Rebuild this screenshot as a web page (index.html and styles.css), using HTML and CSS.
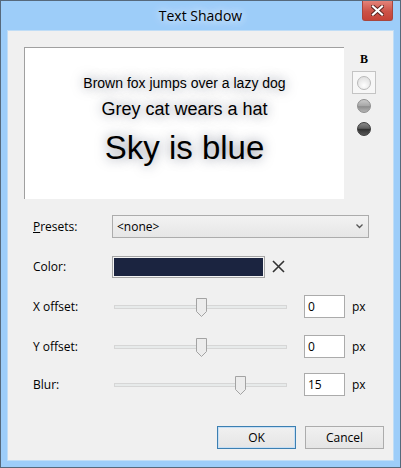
FILE: index.html
```html
<!DOCTYPE html>
<html lang="en">
<head>
  <meta charset="UTF-8" />
  <title>Text Shadow</title>
  <link rel="stylesheet" href="styles.css">
</head>
<body>
  <div class="window">
    <div class="titlebar">
      <span class="title">Text Shadow</span>
      <button class="close" aria-label="Close">
        <svg width="13" height="11" viewBox="0 0 13 11">
          <path d="M2 1.5 L11 9.5 M11 1.5 L2 9.5" stroke="#5a2420" stroke-width="4" stroke-linecap="square"/>
          <path d="M2 1.5 L11 9.5 M11 1.5 L2 9.5" stroke="#fff" stroke-width="2.2" stroke-linecap="square"/>
        </svg>
      </button>
    </div>

    <div class="client">
      <div class="top">
        <div class="preview">
          <p class="sample sample-s">Brown fox jumps over a lazy dog</p>
          <p class="sample sample-m">Grey cat wears a hat</p>
          <p class="sample sample-l">Sky is blue</p>
        </div>
        <div class="toolbar">
          <span class="tool bold">B</span>
          <span class="tool selected"><span class="dot dot-light"></span></span>
          <span class="tool"><span class="dot dot-mid"></span></span>
          <span class="tool"><span class="dot dot-dark"></span></span>
        </div>
      </div>

      <div class="form">
        <div class="row">
          <label class="label"><u>P</u>resets:</label>
          <div class="combo">
            <span>&lt;none&gt;</span>
            <svg width="7" height="5" viewBox="0 0 7 5"><path d="M0.5 0.5 L3.5 3.5 L6.5 0.5" fill="none" stroke="#555" stroke-width="1.3"/></svg>
          </div>
        </div>

        <div class="row">
          <label class="label">Color:</label>
          <div class="color-well"></div>
          <svg class="clear" width="13" height="13" viewBox="0 0 13 13"><path d="M1 1 L12 12 M12 1 L1 12" stroke="#333" stroke-width="1.6"/></svg>
        </div>

        <div class="row">
          <label class="label">X offset:</label>
          <div class="slider">
            <div class="track"></div>
            <svg class="thumb" style="left: 82px" width="11" height="19" viewBox="0 0 11 19"><path d="M0.5 0.5 H10.5 V13.5 L5.5 18.5 L0.5 13.5 Z" fill="#ececec" stroke="#a3a3a3"/></svg>
          </div>
          <input class="num" type="text" value="0" />
          <span class="unit">px</span>
        </div>

        <div class="row">
          <label class="label">Y offset:</label>
          <div class="slider">
            <div class="track"></div>
            <svg class="thumb" style="left: 82px" width="11" height="19" viewBox="0 0 11 19"><path d="M0.5 0.5 H10.5 V13.5 L5.5 18.5 L0.5 13.5 Z" fill="#ececec" stroke="#a3a3a3"/></svg>
          </div>
          <input class="num" type="text" value="0" />
          <span class="unit">px</span>
        </div>

        <div class="row row-blur">
          <label class="label">Blur:</label>
          <div class="slider">
            <div class="track"></div>
            <svg class="thumb" style="left: 121px" width="11" height="19" viewBox="0 0 11 19"><path d="M0.5 0.5 H10.5 V13.5 L5.5 18.5 L0.5 13.5 Z" fill="#ececec" stroke="#a3a3a3"/></svg>
          </div>
          <input class="num" type="text" value="15" />
          <span class="unit">px</span>
        </div>
      </div>

      <div class="buttons">
        <button class="btn btn-default">OK</button>
        <button class="btn">Cancel</button>
      </div>
    </div>
  </div>
</body>
</html>
```

FILE: styles.css
```css
body {
  margin: 0;
  padding: 0;
  background-color: #9dcdf9;
  font-family: "Open Sans", sans-serif;
  font-size: 12px;
  color: #000;
}
.window {
  position: relative;
  box-sizing: border-box;
  width: 401px;
  height: 468px;
  border: 1px solid #56697c;
  background-color: #9dcdf9;
  padding: 0 6px 6px 6px;
}
.titlebar {
  height: 29px;
  display: flex;
  align-items: center;
  justify-content: center;
}
.title {
  font-size: 14px;
  color: #000;
  text-shadow: 0 0 8px rgba(255,255,255,0.9), 0 0 14px rgba(255,255,255,0.6);
}
.close {
  position: absolute;
  top: 0;
  right: 7px;
  width: 31px;
  height: 20px;
  padding: 0;
  border: 1px solid #a8463d;
  border-top: none;
  border-radius: 0 0 3px 3px;
  background: linear-gradient(#e48379, #cc5247 55%, #c54237);
  display: flex;
  align-items: center;
  justify-content: center;
}
.client {
  box-sizing: border-box;
  height: 431px;
  border: 1px solid #c0ddf6;
  background-color: #f0f0f0;
}
.top {
  display: flex;
  padding: 16px 0 0 16px;
}
.preview {
  box-sizing: border-box;
  width: 320px;
  height: 152px;
  background-color: #fff;
  border-top: 1px solid #a0a0a0;
  border-left: 1px solid #a0a0a0;
  padding-top: 26px;
  text-align: center;
  font-family: "Liberation Sans", Arial, sans-serif;
}
.sample {
  margin: 0;
  color: #000;
  text-shadow: 0 0 12px rgba(27,36,64,0.55);
}
.sample-s {
  font-size: 14px;
  line-height: 18px;
}
.sample-m {
  font-size: 18px;
  line-height: 24px;
  margin-top: 5px;
}
.sample-l {
  font-size: 33px;
  line-height: 44px;
  margin-top: 5px;
}
.toolbar {
  display: flex;
  flex-direction: column;
  width: 24px;
  margin-left: 8px;
}
.tool {
  box-sizing: border-box;
  height: 23px;
  display: flex;
  align-items: center;
  justify-content: center;
}
.bold {
  height: 24px;
  font-family: "Liberation Serif", serif;
  font-weight: bold;
  font-size: 12px;
}
.selected {
  border: 1px solid #c4c4c4;
  background-color: #f7f7f7;
}
.dot {
  width: 14px;
  height: 14px;
  border-radius: 50%;
  box-sizing: border-box;
}
.dot-light {
  border: 1px solid #b9b9b9;
  background: radial-gradient(circle at 50% 70%, #ffffff, #e4e4e4 70%);
}
.dot-mid {
  border: 1px solid #8e8e8e;
  background: linear-gradient(#c9c9c9, #a6a6a6 50%, #8d8d8d 55%, #b4b4b4);
}
.dot-dark {
  border: 1px solid #3c3c3c;
  background: linear-gradient(#8a8a8a, #5e5e5e 45%, #2e2e2e 50%, #585858);
}
.form {
  padding-left: 25px;
  padding-top: 16px;
}
.row {
  display: flex;
  align-items: center;
  height: 23px;
  margin-top: 17px;
}
.row:first-child {
  margin-top: 0;
}
.row-blur {
  margin-top: 15px;
}
.label {
  width: 79px;
  flex: none;
}
.combo {
  box-sizing: border-box;
  width: 257px;
  height: 23px;
  border: 1px solid #acacac;
  background: linear-gradient(#f2f2f2, #e6e6e6);
  display: flex;
  align-items: center;
  justify-content: space-between;
  padding: 0 5px 0 4px;
}
.color-well {
  box-sizing: border-box;
  width: 153px;
  height: 22px;
  border: 1px solid #a5a5a5;
  box-shadow: inset 0 0 0 1px #f4f4f4;
  background-color: #1b2440;
}
.clear {
  margin-left: 7px;
}
.slider {
  position: relative;
  width: 173px;
  height: 23px;
  margin-left: 2px;
  display: flex;
  align-items: center;
}
.track {
  box-sizing: border-box;
  width: 100%;
  height: 4px;
  border: 1px solid #d6d6d6;
  background-color: #e7eaea;
}
.thumb {
  position: absolute;
  top: 3px;
}
.num {
  box-sizing: border-box;
  width: 41px;
  height: 23px;
  margin: 0 0 0 17px;
  padding: 0 3px;
  border: 1px solid #ababab;
  background-color: #fff;
  font-family: "Open Sans", sans-serif;
  font-size: 12px;
  color: #000;
  outline: none;
}
.unit {
  margin-left: 7px;
}
.buttons {
  display: flex;
  justify-content: flex-end;
  gap: 9px;
  padding-right: 9px;
  margin-top: 30px;
}
.btn {
  box-sizing: border-box;
  width: 79px;
  height: 23px;
  border: 1px solid #acacac;
  background: linear-gradient(#f0f0f0, #e5e5e5);
  font-family: "Open Sans", sans-serif;
  font-size: 12px;
  color: #000;
  padding: 0;
}
.btn-default {
  border-color: #3c7fb1;
  box-shadow: inset 0 0 0 1px #c6dff5;
}
```
